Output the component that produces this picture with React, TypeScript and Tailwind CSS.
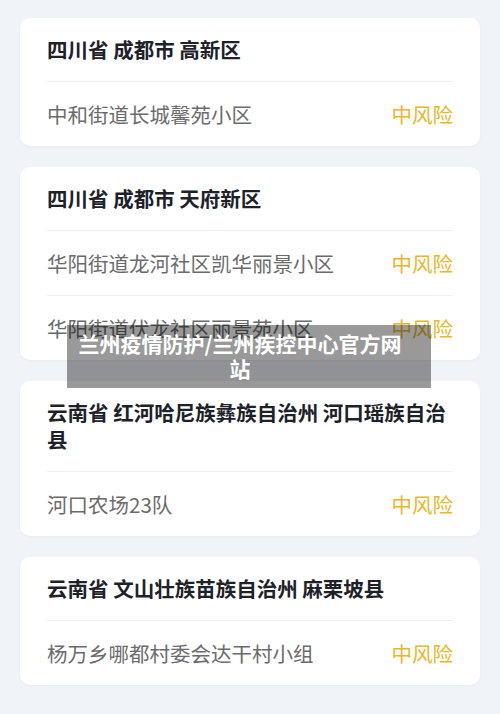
import React from "react";

const cards: { title: string; rows: string[] }[] = [
  { title: "四川省 成都市 高新区", rows: ["中和街道长城馨苑小区"] },
  { title: "四川省 成都市 天府新区", rows: ["华阳街道龙河社区凯华丽景小区", "华阳街道伏龙社区丽景苑小区"] },
  { title: "云南省 红河哈尼族彝族自治州 河口瑶族自治县", rows: ["河口农场23队"] },
  { title: "云南省 文山壮族苗族自治州 麻栗坡县", rows: ["杨万乡哪都村委会达干村小组"] },
];

export default function App() {
  return (
    <div
      className="relative w-[500px] h-[714px] overflow-hidden bg-[#f0f3f8] px-[20px] pt-[18px]"
      style={{ fontFamily: '"Noto Sans CJK SC", "Noto Sans", sans-serif' }}
    >
      <div className="flex flex-col gap-[21px]">
        {cards.map((c, i) => (
          <div key={i} className="bg-white rounded-[10px] px-[27px] shadow-[0_1px_3px_rgba(0,0,0,0.04)]">
            <div className="py-[18px] text-[20.5px] leading-[27px] font-bold text-[#1d2129] pr-[4px]">{c.title}</div>
            {c.rows.map((r, j) => (
              <div key={j} className="border-t border-[#eef0f3] py-[18px] flex justify-between items-center text-[20.5px] leading-[28px]">
                <span className="text-[#6b6b6b]">{r}</span>
                <span className="text-[#e8b82a]">中风险</span>
              </div>
            ))}
          </div>
        ))}
      </div>
      <div className="absolute left-[67px] top-[325px] w-[364px] h-[63px] bg-black/40 pl-[11px] pr-[29px] py-[6px] text-center text-white font-bold text-[21px] leading-[25px]">
        兰州疫情防护/兰州疾控中心官方网站
      </div>
    </div>
  );
}
